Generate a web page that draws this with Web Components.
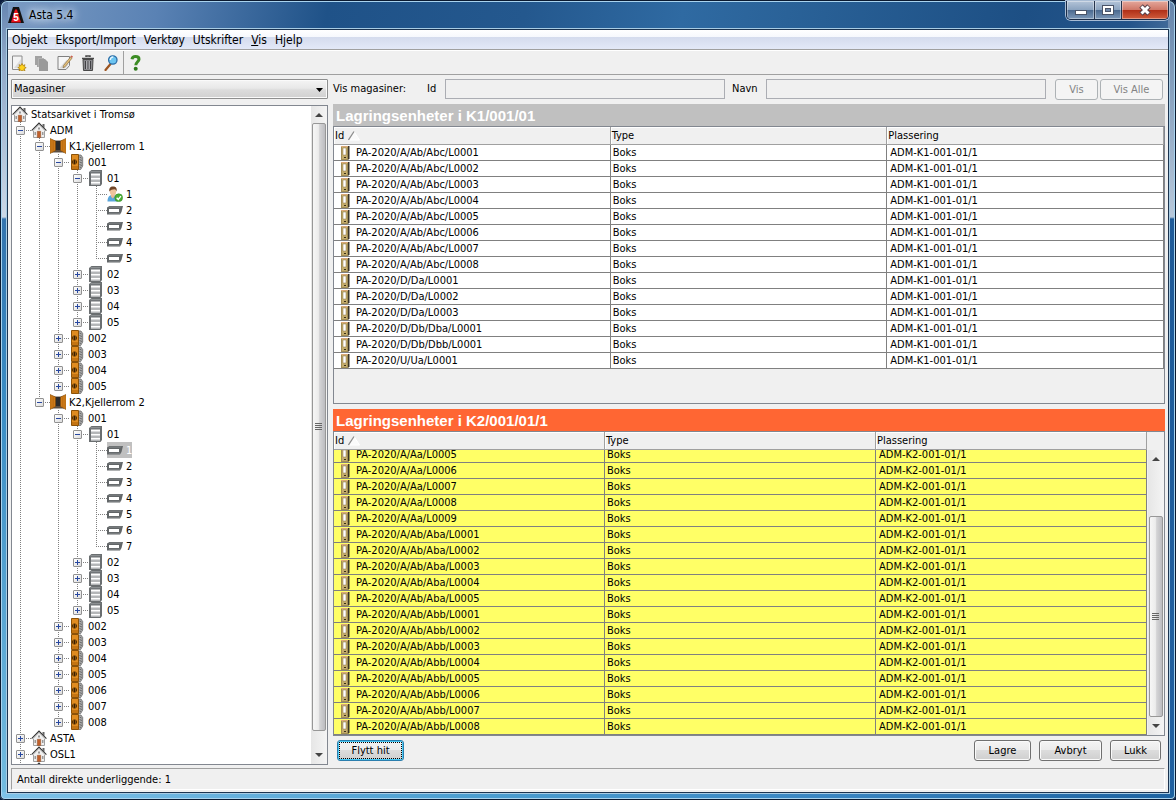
<!DOCTYPE html>
<html lang="no">
<head>
<meta charset="utf-8">
<title>Asta 5.4</title>
<style>
html,body{margin:0;height:100%}
body{background:#0a1c3c;font:11px/16px "DejaVu Sans Condensed","Noto Sans",sans-serif;color:#000}
</style>
</head>
<body>
<asta-window caption="Asta 5.4">
  <menu-bar></menu-bar>
  <tool-bar></tool-bar>
  <main-area>
    <archive-tree slot="side"></archive-tree>
    <filter-bar slot="filter"></filter-bar>
    <storage-table slot="tables" id="source" caption="Lagringsenheter i K1/001/01"></storage-table>
    <storage-table slot="tables" id="target" tone="target" caption="Lagringsenheter i K2/001/01/1"></storage-table>
    <action-row slot="actions"></action-row>
  </main-area>
  <status-bar>Antall direkte underliggende: 1</status-bar>
</asta-window>

<script>
const define = (name, html, init) => customElements.define(name, class extends HTMLElement {
  constructor() {
    super();
    this.attachShadow({ mode: 'open' });
  }
  connectedCallback() {
    this.shadowRoot.innerHTML = typeof html === 'function' ? html(this) : html;
    if (init) init(this, this.shadowRoot);
  }
});

const ICONS = {
  logo: `<path d="M5 0h6l5 16H0z" fill="#111"/><path d="M7 2.500h2L13 15.500H3z" fill="#e8141c"/><text x="8" y="14" text-anchor="middle" font-family="Liberation Sans" font-weight="bold" font-size="10" fill="#fff">5</text>`,
  house: `<path d="M2.500 8.500 8 2.500l5.500 6v7h-11z" fill="#f0f0f0" stroke="#a0a0a0"/><path d="M11.500 2h2v4l-2-2z" fill="#666"/><path d="M.6 8.600 8 1.100l7.400 7.500" fill="none" stroke="#333" stroke-width="1.100"/><path d="M1.800 9.300 8 3l6.200 6.300" fill="none" stroke="#d8d8d8" stroke-width=".8"/><path d="M6.300 9.300h3.400v6.200H6.300z" fill="#c0602c" stroke="#8a4a24" stroke-width=".5"/><path d="M3.500 10H5v3H3.500zM11 10h1.500v3H11zM7 5.500h2v2H7z" fill="#999"/>`,
  room: `<path d="M2 2.500h12v12H2z" fill="#5c5044"/><path d="M5 3h6v9H5z" fill="#2c2c2c"/><path d="M0 .5 5.500 3v9.500L0 15.500z" fill="#dd861e" stroke="#7a4608" stroke-width=".6"/><path d="M16 .5 10.500 3v9.500l5.500 3z" fill="#dd861e" stroke="#7a4608" stroke-width=".6"/><path d="M2 1.500v13M3.800 2.300v11M14 1.500v13M12.200 2.300v11" stroke="#a8600c" stroke-width=".8"/>`,
  unit: `<path d="M9.500 1H12l1.700 2.500v8.500l-2 3.500H9.500z" fill="#a8a8a8" stroke="#606060" stroke-width=".7"/><path d="M10.500 3l2 1M10.500 5.500l2.500 1M10.500 8l2.500 1M10.500 10.500l2.500 1M10.500 13l1.500.5" stroke="#5a5a5a" stroke-width=".8"/><path d="M2.500.5h7v15h-7z" fill="#e08c20" stroke="#8c5208"/><path d="M3 12h6v3H3z" fill="#c47412"/><circle cx="5.500" cy="8" r="2.200" fill="#d88418" stroke="#3a2000" stroke-width=".7"/><path d="M5.500 6v4M3.500 8h4" stroke="#201000" stroke-width=".8"/>`,
  shelf: `<path d="M3.500 0h10.500v14l-1.500 2H1V2z" fill="#6a6e70"/><path d="M3 1h10l-1.500 1.300H1.600z" fill="#8c9092"/><path d="M3 3.500h9v3H3zM3 7.500h9v3H3zM3 11.500h9v3H3z" fill="#fff"/><path d="M3 5.500h9v1H3zM3 9.500h9v1H3zM3 13.500h9v1H3z" fill="#b4b6b8"/>`,
  slot: `<path d="M2.500 4H16l-1.500 6L13 12.500H0v-7z" fill="#626668"/><path d="M2.800 4.500H15l-2 1.200H1.800z" fill="#7c8082"/><path d="M2 7h10v3H2z" fill="#fff"/><path d="M2 11.300h11" stroke="#8c9092" stroke-width=".7"/>`,
  user: `<path d="M.5 15.500c0-4 1.500-6.500 5-6.500s5 2.500 5 6.500z" fill="#5aa6dc"/><path d="M4 8.500h3.500v2.200L5.700 12.500 4 10.700z" fill="#e8b890"/><ellipse cx="6" cy="5.500" rx="3.200" ry="4" fill="#f0c49c"/><path d="M2.400 5.500C1.800 2 3.500.3 6 .4c3-.2 4.300 2 3.600 5.100C9 4 8.500 3.300 7.500 3.200 5.500 3.500 3.500 3.500 2.400 5.500z" fill="#6e4426"/><circle cx="11.700" cy="11.700" r="3.900" fill="#4cb036" stroke="#2c8020" stroke-width=".5"/><path d="m9.700 11.800 1.600 1.600 2.600-3.300" fill="none" stroke="#fff" stroke-width="1.400"/>`,
  page: `<path d="M1.500 1h9.500v13.500h-9.500z" fill="#f4f4f4" stroke="#8c8c8c"/><path d="M3 13 10 4v9z" fill="#dcdcdc"/><path d="m11 8.500 1 2 2-.8-.8 2 2 1-2 1 .8 2-2-.8-1 1.600-1-1.600-2 .8.800-2-2-1 2-1-.8-2 2 .8z" fill="#ffd21c" stroke="#a87804" stroke-width=".7"/>`,
  copy: `<path d="M1 1h7v2h2v9H3V10H1z" fill="#a2a2a2"/><path d="M5 4h6l3 3v9H5z" fill="#9a9a9a"/><path d="M4.500 12V3.500H10" fill="none" stroke="#b8b8b8" stroke-width=".7"/>`,
  edit: `<path d="M1 1.500h11.500v9L9 14.500H1z" fill="#f6f6f6" stroke="#808080"/><path d="m2 13.500 8-9 1.500 5-3 4z" fill="#d8d8d8"/><path d="m6.500 10.500 7-8.500 1.500 1.200L8 11.800l-2 1z" fill="#e4c07c" stroke="#8c7040" stroke-width=".7"/><path d="m13.300 1.600 1.100-1.200L16 1.600l-1 1.400z" fill="#c86050"/>`,
  trash: `<path d="M2 3.500h12M6 2V1h4v1" fill="none" stroke="#484848" stroke-width="1.500"/><path d="M3 4.500h10l-.5 11h-9z" fill="#88888c" stroke="#484848"/><path d="M5.500 6v8M8 6v8M10.500 6v8" stroke="#404044"/><path d="M6.700 6v8M9.200 6v8" stroke="#c0c0c4" stroke-width=".8"/>`,
  find: `<path d="m2.500 15 5-6" stroke="#9c5420" stroke-width="2.200" stroke-linecap="round"/><circle cx="9.800" cy="5" r="4.200" fill="#6cc4f0" stroke="#2c6ea8" stroke-width="1.300"/><path d="M7.300 5c0-2 1.200-3 3-2.900" fill="none" stroke="#e4f6ff" stroke-width="1.500"/>`,
  help: `<path d="M4 4.300C4.300 2.300 5.500 1.600 7.500 1.600c2.200 0 3.500 1 3.500 2.700C11 6.600 7.800 7 7.800 10.300" fill="none" stroke="#3c8c24" stroke-width="3"/><circle cx="7.700" cy="13.700" r="2" fill="#2f7a1c"/>`,
  box: `<path d="M7 1h1.500v12.500L7 15z" fill="#3a3428"/><path d="M0 1h7v14H0z" fill="#a08c54"/><path d="M1 2h5v12H1z" fill="#c4ac6c"/><path d="M0 1h7v1H0z" fill="#dca878"/><path d="M2 3h3v7H2z" fill="#fff" stroke="#8c7444" stroke-width=".5"/><path d="M3 12h2v1H3z" fill="#3a3018"/>`,
  sort: `<path d="M6 .5 11.500 9H.5z" fill="#fafafa"/><path d="M6 .5 11.500 9H.5" fill="none" stroke="#fff"/><path d="M.5 9 6 .5" stroke="#8c8c8c" stroke-width="1.300"/>`
};

define('ui-icon', el => {
  const n = el.getAttribute('name'), s = n === 'sort' ? [12, 10] : n === 'box' ? [9, 16] : [16, 16];
  return `<style>:host{display:inline-block;flex:none;line-height:0}svg{display:block}</style>
  <svg width="${s[0]}" height="${s[1]}" viewBox="0 0 ${s[0]} ${s[1]}" aria-hidden="true">${ICONS[n]}</svg>`;
});

define('asta-window', el => `<style>
:host{display:flex;flex-direction:column;box-sizing:border-box;min-height:100vh;padding:0 7px 7px;border-radius:7px 7px 5px 5px;
 box-shadow:inset 0 0 0 1px #0b1a30,inset 0 0 0 2px #a9d3ee;
 background:
 linear-gradient(90deg,#7fc2e8,#4c9ed0 40%,#3a86c2 70%,#1d62a0) 0 100%/100% 8px no-repeat,
 linear-gradient(#6484b0,#8fa8c8 60px,#ccd8e6 217px,#3474ae 219px,#3a8cc4 50%,#74bce0) 0 0/8px 100% no-repeat,
 linear-gradient(#6484ac,#7c98b8 60px,#b8c8da 217px,#1e5a98 219px,#2060a0) 100% 0/8px 100% no-repeat,
 linear-gradient(100deg,#7c9cc4,#5a82b4 12%,#1f5288 25%,#24588e 40%,#2f6aa2 52%,#2a6298 60%,#1d4f84 78%,#24548a 86%,#7490b2 95%)}
header{display:flex;align-items:center;height:29px;padding-left:1px;gap:4px}
h1{margin:0;padding:0 6px 0 1px;font:12px/16px "DejaVu Sans Condensed",sans-serif;text-shadow:0 0 6px #dce8f4,0 0 8px #dce8f4,0 0 12px #dce8f4}
.buttons{display:flex;align-self:flex-start;margin:1px 0 0 auto;border:1px solid #1a2c48;border-top:0;border-radius:0 0 5px 5px;overflow:hidden;box-shadow:0 0 0 1px #a8bcd4}
button{display:grid;place-items:center;padding:0;margin:0;width:28px;height:18px;border:0;border-right:1px solid #26344c;background:linear-gradient(#b4c4d8,#8ca4c0 48%,#4c6a90 52%,#7c98b8);box-shadow:inset 0 0 0 1px #ffffff60}
button:nth-child(2){width:27px}
button:last-child{width:46px;border:0;background:linear-gradient(#e4a89c,#d07868 48%,#b03018 52%,#d05c3c)}
.client{display:flex;flex-direction:column;flex:1;border:1px solid #1c3450;box-shadow:0 0 0 1px #a8cce4;background:#f0f0f0}
</style>
<header><ui-icon name="logo"></ui-icon><h1>${el.getAttribute('caption')}</h1>
<div class="buttons">
<button aria-label="Minimer"><svg width="14" height="12"><rect x="1.500" y="6.500" width="11" height="4" fill="#fff" stroke="#4a5468"/></svg></button>
<button aria-label="Maksimer"><svg width="14" height="12"><rect x="1.500" y="1.500" width="11" height="9" fill="#fff" stroke="#4a5468"/><rect x="4.500" y="4.500" width="5" height="3" fill="#7088a8" stroke="#4a5468"/></svg></button>
<button aria-label="Lukk vindu"><svg width="14" height="12"><path d="m3 2 8 8M11 2 3 10" stroke="#584048" stroke-width="5"/><path d="m3.500 2.500 7 7M10.500 2.500 3.500 9.500" stroke="#fff" stroke-width="3"/></svg></button>
</div></header>
<div class="client"><slot></slot></div>`);

define('menu-bar', `<style>
:host{display:block;border-bottom:1px solid #a0a0a0;background:linear-gradient(#fff,#f6f8fd 7px,#d4dbed 7px,#e3e9f8)}
nav{display:flex;height:19px;padding-left:4px;gap:8px;font-size:12px;line-height:20px}
a{color:#000;text-decoration:none}
</style>
<nav><a href="#objekt">Objekt</a><a href="#eksport">Eksport/Import</a><a href="#verktoy">Verktøy</a><a href="#utskrifter">Utskrifter</a><a href="#vis"><u>V</u>is</a><a href="#hjelp">Hjelp</a></nav>`);

define('tool-bar', `<style>
:host{display:block;border-top:1px solid #fff;border-bottom:1px solid #a0a0a0}
div{display:flex;height:23px;padding-left:3px;gap:7px}
button{display:grid;place-items:center;width:16px;padding:0;border:0;background:none}
button:last-child{border-left:1px solid #a0a0a0;width:24px;margin-left:-3px}
</style>
<div role="toolbar">
<button aria-label="Ny"><ui-icon name="page"></ui-icon></button><button aria-label="Kopier"><ui-icon name="copy"></ui-icon></button><button aria-label="Rediger"><ui-icon name="edit"></ui-icon></button><button aria-label="Slett"><ui-icon name="trash"></ui-icon></button><button aria-label="Finn"><ui-icon name="find"></ui-icon></button><button aria-label="Om Asta"><ui-icon name="help"></ui-icon></button>
</div>`);

define('main-area', `<style>
:host{display:flex;flex:1;gap:5px;padding:4px 3px 3px}
.side{display:flex;flex:0 0 317px}
.work{display:flex;flex-direction:column;flex:1;min-width:0}
</style>
<div class="side"><slot name="side"></slot></div>
<div class="work"><slot name="filter"></slot><slot name="tables"></slot><slot name="actions"></slot></div>`);

define('scroll-strip', el => {
  const [a, b, c] = (el.getAttribute('parts') || '0 1 0').split(' ');
  return `<style>
:host{display:flex;flex-direction:column;width:16px;flex:none;background:linear-gradient(90deg,#e6e6e6,#f4f4f4)}
button{flex:none;height:17px;border:0;padding:0;background:none;display:grid;place-items:center}
.thumb{box-sizing:border-box;border:1px solid #979797;border-radius:2px;margin:0 1px;display:grid;place-items:center;background:linear-gradient(90deg,#f6f6f6,#ececec 45%,#d4d4d6 55%,#bcbcc0)}
</style>
<button aria-label="Opp"><svg width="8" height="5"><path d="M0 5 4 1l4 4z" fill="#444"/></svg></button>
<div style="flex:${a} 1 0"></div>
<div class="thumb" style="flex:${b} 1 0"><svg width="8" height="8"><path d="M0 .5h7M0 2.500h7M0 4.500h7M0 6.500h7" stroke="#666"/></svg></div>
<div style="flex:${c} 1 0"></div>
<button aria-label="Ned"><svg width="8" height="5"><path d="m0 0 4 4 4-4z" fill="#444"/></svg></button>`;
});

const leaves = (n, first) => Array.from({ length: n }, (_, i) => ({ t: String(i + 1), i: i === 0 && first === 'user' ? 'user' : 'slot', sel: i === 0 && first === 'selected' }));
const closed = (from, to, width, icon) => Array.from({ length: to - from + 1 }, (_, i) => ({ t: String(from + i).padStart(width, '0'), i: icon, x: '+' }));
const room = (t, units, slots, first) => ({ t, i: 'room', x: '-', c: [
  { t: '001', i: 'unit', x: '-', c: [{ t: '01', i: 'shelf', x: '-', c: leaves(slots, first) }, ...closed(2, 5, 2, 'shelf')] },
  ...closed(2, units, 3, 'unit')] });
const TREE = { t: 'Statsarkivet i Tromsø', i: 'house', c: [
  { t: 'ADM', i: 'house', x: '-', c: [room('K1,Kjellerrom 1', 5, 5, 'user'), room('K2,Kjellerrom 2', 8, 7, 'selected')] },
  { t: 'ASTA', i: 'house', x: '+' }, { t: 'OSL1', i: 'house', x: '+' }, { t: '', i: 'house', x: '+' }] };

const treeRows = (node, guides = []) => {
  const cells = guides.map((g, k) => {
    if (k < guides.length - 1) return `<i class="${g ? 'v' : ''}"></i>`;
    const knob = node.x ? `<button aria-label="${node.x === '+' ? 'Utvid' : 'Skjul'} ${node.t}"><svg width="7" height="7"><path d="M1 3.500h5${node.x === '+' ? 'M3.500 1v5' : ''}" stroke="#2848a0"/></svg></button>` : '';
    return `<i class="h ${g ? 'v' : 'end'}">${knob}</i>`;
  }).join('');
  const self = `<div class="row" role="treeitem">${cells}<span class="${node.sel ? 'sel' : ''}"><ui-icon name="${node.i}"></ui-icon>${node.t}</span></div>`;
  const kids = (node.c || []).map((c, k, all) => treeRows(c, [...guides, k < all.length - 1])).join('');
  return self + kids;
};

define('archive-tree', () => `<style>
:host{display:flex;flex-direction:column;gap:6px;flex:1;min-width:0}
.pick{display:grid}
select{grid-area:1/1;appearance:none;height:20px;margin:0;padding:0 2px;border:1px solid #8e8f8f;border-radius:1px;font:inherit;color:#000;background:linear-gradient(#f4f4f4,#e8e8e8 45%,#dcdcdc 55%,#d0d0d0);box-shadow:inset 0 0 0 1px #fafafa}
.pick svg{grid-area:1/1;justify-self:end;align-self:center;margin:2px 5px 0 0;pointer-events:none}
.panel{display:flex;flex:1 1 0;min-height:0;border:1px solid #828790;background:#fff;overflow:hidden}
.rows{flex:1 1 0;min-width:0;overflow:hidden;height:0;min-height:100%}
.row{display:flex;height:16px}
i{display:block;box-sizing:border-box;width:19px;height:16px;padding:4px;flex:none}
i{--v:repeating-linear-gradient(#808080 0 1px,transparent 1px 2px);--h:repeating-linear-gradient(90deg,#808080 0 1px,transparent 1px 2px)}
.v{background:var(--v) 8px 0/1px 16px no-repeat}
.v.h{background:var(--v) 8px 0/1px 16px no-repeat,var(--h) 8px 8px/11px 1px no-repeat}
.end{background:var(--v) 8px 0/1px 9px no-repeat,var(--h) 8px 8px/11px 1px no-repeat}
i button{display:block;box-sizing:border-box;width:9px;height:9px;padding:0;border:1px solid #919191;border-radius:1px;background:linear-gradient(135deg,#fff,#dcdcdc)}
i svg{display:block}
span{display:flex;gap:3px;height:16px;line-height:18px;white-space:nowrap}
.sel{background:#c0c0c0;color:#fff}
</style>
<div class="pick"><select aria-label="Vis"><option>Magasiner</option></select><svg width="7" height="4"><path d="M0 0h7L3.500 4z"/></svg></div>
<div class="panel"><div class="rows" role="tree">${treeRows(TREE)}</div><scroll-strip parts="0 608 16"></scroll-strip></div>`);

define('ui-button', el => `<style>
:host{display:block}
button{width:100%;height:21px;box-sizing:border-box;margin:0;padding:0;border:1px solid #707070;border-radius:3px;font:inherit;color:#000;background:linear-gradient(#f4f4f4,#ebebeb 48%,#dcdcdc 50%,#cfcfcf);box-shadow:inset 0 0 0 1px #fafafa}
:host([focus]) button{border-color:#2c7fae;outline:1px dotted #000;outline-offset:-3px;box-shadow:inset 0 0 0 1px #48c8f4}
button:disabled{color:#838383;border-color:#adb2b5;background:#f4f4f4;box-shadow:none}
</style><button ${el.hasAttribute('disabled') ? 'disabled' : ''}><slot></slot></button>`);

define('filter-bar', `<style>
:host{display:grid;grid-template-columns:94px 18px 1fr 41px 1fr 9px 43px 2px 63px;padding-right:2px;height:21px;margin-bottom:4px;line-height:20px}
input{box-sizing:border-box;width:100%;min-width:0;height:20px;border:1px solid #abadb3;background:#f0f0f0;padding:0 3px;font:inherit}
label[for=name]{padding-left:7px}
ui-button{line-height:16px}
ui-button:nth-of-type(1){grid-column:7}
ui-button:nth-of-type(2){grid-column:9}
</style>
<span>Vis magasiner:</span><label for="id">Id</label><input id="id" disabled><label for="name">Navn</label><input id="name" disabled><ui-button disabled>Vis</ui-button><ui-button disabled>Vis Alle</ui-button>`);

const num = n => 'L' + String(n).padStart(4, '0');
const series = (prefix, a, b) => Array.from({ length: b - a + 1 }, (_, i) => `PA-2020/${prefix}/${num(a + i)}`);
const DATA = {
  source: { place: 'ADM-K1-001-01/1', ids: [...series('A/Ab/Abc', 1, 8), ...series('D/Da', 1, 3), ...series('D/Db/Dba', 1, 1), ...series('D/Db/Dbb', 1, 1), ...series('U/Ua', 1, 1)] },
  target: { place: 'ADM-K2-001-01/1', ids: [...series('A/Aa', 5, 9), ...series('A/Ab/Aba', 1, 5), ...series('A/Ab/Abb', 1, 8)] }
};

define('storage-table', el => {
  const d = DATA[el.id], target = el.id === 'target';
  return `<style>
:host{display:flex;flex-direction:column;flex:300 1 0;min-height:0;--row:#fff;--bar:#c0c0c0}
:host([tone=target]){flex-grow:327;margin-top:5px;--row:#ffff66;--bar:#ff6633}
h2{margin:0;height:22px;padding-left:3px;background:var(--bar);color:#fff;font:bold 15px/24px "Liberation Sans",sans-serif}
.frame{display:flex;flex:1 1 0;min-height:0;border:1px solid #828790;overflow:hidden}
.scroll{flex:1 1 0;min-width:0;overflow:auto;scrollbar-width:none}
.strip{display:flex;padding:18px 0 0 1px}
table{width:100%;table-layout:fixed;border-spacing:0}
th,td{box-sizing:border-box;padding:0 0 0 2px;text-align:left;font-weight:normal;white-space:nowrap;overflow:hidden;border-right:1px solid #808080;border-bottom:1px solid #808080}
td{height:16px;line-height:15px;background:var(--row)}
th{position:sticky;top:0;height:18px;line-height:17px;padding-left:1px;background:#f0f0f0;border-color:#a0a0a0;box-shadow:inset 1px 1px #fff;z-index:1}
td:last-child{padding-left:3px}
.cell{display:flex;align-items:center;height:15px;overflow:hidden}
td .cell{gap:6px;padding-left:5px}
th .cell{gap:4px}
</style>
<h2>${el.getAttribute('caption')}</h2>
<div class="frame"><div class="scroll"><table>
<thead><tr><th><div class="cell">Id<ui-icon name="sort"></ui-icon></div></th><th>Type</th><th>Plassering</th></tr></thead>
<tbody>${d.ids.map(id => `<tr><td><div class="cell"><ui-icon name="box"></ui-icon>${id}</div></td><td>Boks</td><td>${d.place}</td></tr>`).join('')}</tbody>
</table></div>${target ? '<div class="strip"><scroll-strip parts="50 201 1"></scroll-strip></div>' : ''}</div>`;
}, (el, root) => {
  const s = root.querySelector('.scroll');
  const toEnd = () => { s.scrollTop = s.scrollHeight; };
  if (el.id === 'target') { requestAnimationFrame(toEnd); addEventListener('load', toEnd); }
});

define('action-row', `<style>
:host{display:flex;gap:8px;padding:4px;height:21px}
ui-button{width:57px}
ui-button:nth-of-type(1){width:67px;margin-right:auto}
ui-button:nth-of-type(3){width:63px}
ui-button:nth-of-type(4){width:51px}
</style>
<ui-button focus>Flytt hit</ui-button><ui-button>Lagre</ui-button><ui-button>Avbryt</ui-button><ui-button>Lukk</ui-button>`);

define('status-bar', `<style>
:host{display:block;margin:0 3px 2px;padding-left:5px;height:20px;line-height:21px;border:1px solid #a0a0a0;border-right-color:#fff;border-bottom-color:#fff}
</style><slot></slot>`);
</script>
</body>
</html>
